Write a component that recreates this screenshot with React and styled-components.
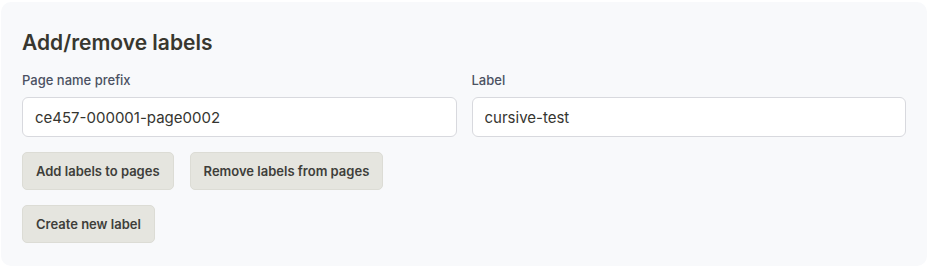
import React from "react";
import styled, { createGlobalStyle } from "styled-components";

const GlobalStyle = createGlobalStyle`
  body {
    margin: 0;
    background: #ffffff;
    font-family: Inter, "Noto Sans", "Liberation Sans", sans-serif;
  }
`;

const App = () => {
  return (
    <>
      <GlobalStyle />
      <Panel>
        <Title>Add/remove labels</Title>
        <Fields>
          <Field>
            <FieldLabel>Page name prefix</FieldLabel>
            <Input defaultValue="ce457-000001-page0002" />
          </Field>
          <Field>
            <FieldLabel>Label</FieldLabel>
            <Input defaultValue="cursive-test" />
          </Field>
        </Fields>
        <ButtonRow>
          <Button>Add labels to pages</Button>
          <Button>Remove labels from pages</Button>
        </ButtonRow>
        <ButtonRow>
          <Button>Create new label</Button>
        </ButtonRow>
      </Panel>
    </>
  );
};

export default App;

/* STYLES */

const Panel = styled.div`
  margin: 2px 2px 0 1px;
  height: 264px;
  box-sizing: border-box;
  padding: 27px 21px 0 21px;
  background: #f8f9fb;
  border-radius: 10px;
`;

const Title = styled.h2`
  margin: 0 0 15px;
  font-size: 21px;
  font-weight: 600;
  line-height: 28px;
  color: #38372f;
`;

const Fields = styled.div`
  display: grid;
  grid-template-columns: 1fr 1fr;
  gap: 15px;
`;

const Field = styled.div`
  display: flex;
  flex-direction: column;
`;

const FieldLabel = styled.label`
  font-size: 13px;
  font-weight: 500;
  line-height: 16px;
  color: #4b5162;
  margin-bottom: 9px;
`;

const Input = styled.input`
  box-sizing: border-box;
  height: 40px;
  padding: 0 12px;
  border: 1px solid #d8d9de;
  border-radius: 6px;
  background: #ffffff;
  font-family: inherit;
  font-size: 15px;
  color: #353530;
  outline: none;
`;

const ButtonRow = styled.div`
  display: flex;
  gap: 16px;
  margin-top: 15px;
`;

const Button = styled.button`
  box-sizing: border-box;
  height: 38px;
  padding: 0 13px;
  border: 1px solid #dcdcd5;
  border-radius: 5px;
  background: #e5e5df;
  font-family: inherit;
  font-size: 13px;
  font-weight: 600;
  color: #3e3e3a;
  cursor: pointer;
`;
